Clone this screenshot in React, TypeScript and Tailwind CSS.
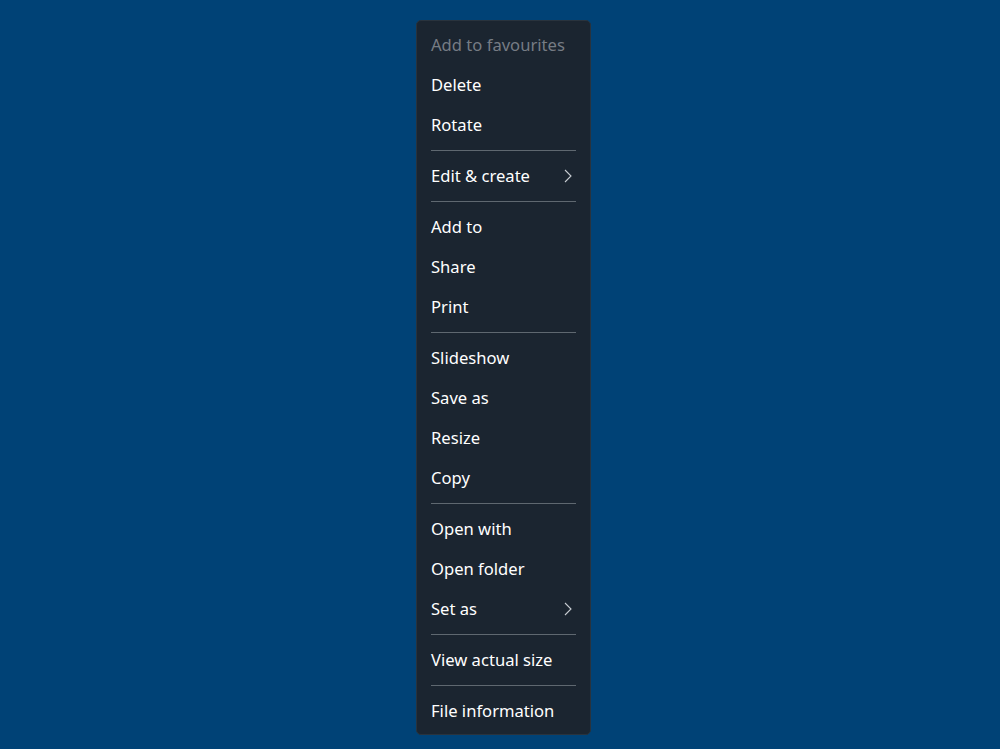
import React from "react";

type Entry = { label: string; disabled?: boolean; sub?: boolean } | "sep";

const entries: Entry[] = [
  { label: "Add to favourites", disabled: true },
  { label: "Delete" },
  { label: "Rotate" },
  "sep",
  { label: "Edit & create", sub: true },
  "sep",
  { label: "Add to" },
  { label: "Share" },
  { label: "Print" },
  "sep",
  { label: "Slideshow" },
  { label: "Save as" },
  { label: "Resize" },
  { label: "Copy" },
  "sep",
  { label: "Open with" },
  { label: "Open folder" },
  { label: "Set as", sub: true },
  "sep",
  { label: "View actual size" },
  "sep",
  { label: "File information" },
];

function Chevron() {
  return (
    <svg width="8" height="14" viewBox="0 0 8 14" fill="none">
      <path d="M1 1 L7 7 L1 13" stroke="#c8cdd2" strokeWidth="1.1" />
    </svg>
  );
}

export default function App() {
  return (
    <div
      className="w-[1000px] h-[749px] bg-[#004276] pt-[20px] pl-[416px]"
      style={{ fontFamily: '"Segoe UI", "Noto Sans", "Open Sans", sans-serif' }}
    >
      <div className="w-[175px] flex flex-col bg-[#1b2530] border border-[#29333d] rounded-[5px] pt-[3px] pb-[4px]">
        {entries.map((e, i) =>
          e === "sep" ? (
            <div key={i} className="h-[11px] pt-[6px] px-[14px]">
              <div className="h-px bg-[#5f6870]" />
            </div>
          ) : (
            <div
              key={i}
              className={
                "h-[40px] flex items-center justify-between pl-[14px] pr-[18px] pt-[2px] text-[16.6px] " +
                (e.disabled ? "text-[#767c84]" : "text-white")
              }
            >
              <span>{e.label}</span>
              {e.sub ? <Chevron /> : null}
            </div>
          )
        )}
      </div>
    </div>
  );
}
